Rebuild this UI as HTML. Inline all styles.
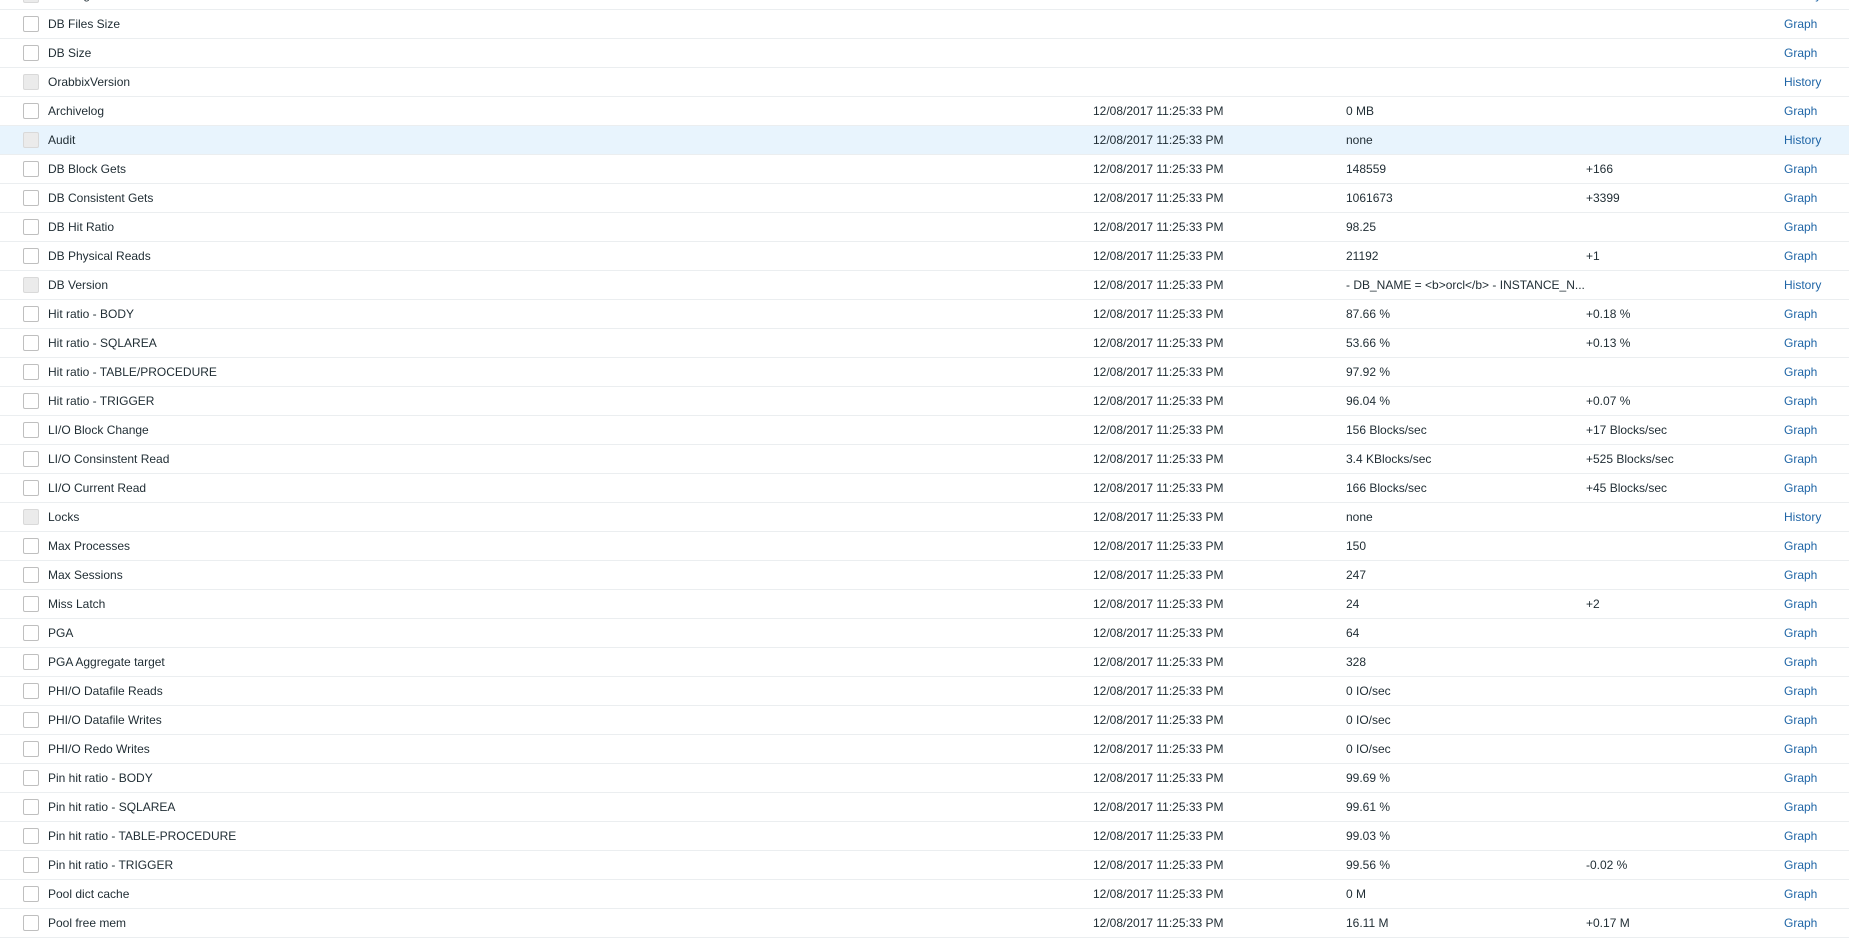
<!DOCTYPE html>
<html><head><meta charset="utf-8"><style>
body{margin:0;background:#fff;font-family:"Liberation Sans",Arial,sans-serif;font-size:12px;color:#1f2c33;overflow:hidden;width:1849px;height:927px}
.t{position:absolute;left:0;top:-19px;width:1849px}
.r{position:relative;height:28px;border-bottom:1px solid #ebeef0}
.r.h{background:#e8f4fd}
.r span{position:absolute;top:7px;white-space:nowrap}
.cb{position:absolute;left:23px;top:6px;width:14px;height:14px;border:1px solid #bfbfbf;border-radius:2px;background:#fff}
.cb.d{background:#ebebeb;border-color:#d9d9d9}
.n{left:48px}.tm{left:1093px}.v{left:1346px}.c{left:1586px}.l{left:1784px;color:#1f65a6}
</style></head><body><div class="t" id="t"></div>
<script>
var rows=[
["d","Last log","","","","History"],
["","DB Files Size","","","","Graph"],
["","DB Size","","","","Graph"],
["d","OrabbixVersion","","","","History"],
["","Archivelog",1,"0 MB","","Graph"],
["dh","Audit",1,"none","","History"],
["","DB Block Gets",1,"148559","+166","Graph"],
["","DB Consistent Gets",1,"1061673","+3399","Graph"],
["","DB Hit Ratio",1,"98.25","","Graph"],
["","DB Physical Reads",1,"21192","+1","Graph"],
["d","DB Version",1,"- DB_NAME = &lt;b&gt;orcl&lt;/b&gt; - INSTANCE_N...","","History"],
["","Hit ratio - BODY",1,"87.66 %","+0.18 %","Graph"],
["","Hit ratio - SQLAREA",1,"53.66 %","+0.13 %","Graph"],
["","Hit ratio - TABLE/PROCEDURE",1,"97.92 %","","Graph"],
["","Hit ratio - TRIGGER",1,"96.04 %","+0.07 %","Graph"],
["","LI/O Block Change",1,"156 Blocks/sec","+17 Blocks/sec","Graph"],
["","LI/O Consinstent Read",1,"3.4 KBlocks/sec","+525 Blocks/sec","Graph"],
["","LI/O Current Read",1,"166 Blocks/sec","+45 Blocks/sec","Graph"],
["d","Locks",1,"none","","History"],
["","Max Processes",1,"150","","Graph"],
["","Max Sessions",1,"247","","Graph"],
["","Miss Latch",1,"24","+2","Graph"],
["","PGA",1,"64","","Graph"],
["","PGA Aggregate target",1,"328","","Graph"],
["","PHI/O Datafile Reads",1,"0 IO/sec","","Graph"],
["","PHI/O Datafile Writes",1,"0 IO/sec","","Graph"],
["","PHI/O Redo Writes",1,"0 IO/sec","","Graph"],
["","Pin hit ratio - BODY",1,"99.69 %","","Graph"],
["","Pin hit ratio - SQLAREA",1,"99.61 %","","Graph"],
["","Pin hit ratio - TABLE-PROCEDURE",1,"99.03 %","","Graph"],
["","Pin hit ratio - TRIGGER",1,"99.56 %","-0.02 %","Graph"],
["","Pool dict cache",1,"0 M","","Graph"],
["","Pool free mem",1,"16.11 M","+0.17 M","Graph"]];
var h="";rows.forEach(function(r){h+='<div class="r'+(r[0].indexOf("h")>=0?" h":"")+'"><div class="cb'+(r[0].indexOf("d")>=0?" d":"")+'"></div><span class="n">'+r[1]+'</span>'+(r[2]?'<span class="tm">12/08/2017 11:25:33 PM</span>':'')+'<span class="v">'+r[3]+'</span><span class="c">'+r[4]+'</span><span class="l">'+r[5]+'</span></div>';});
document.getElementById("t").innerHTML=h;
</script></body></html>
